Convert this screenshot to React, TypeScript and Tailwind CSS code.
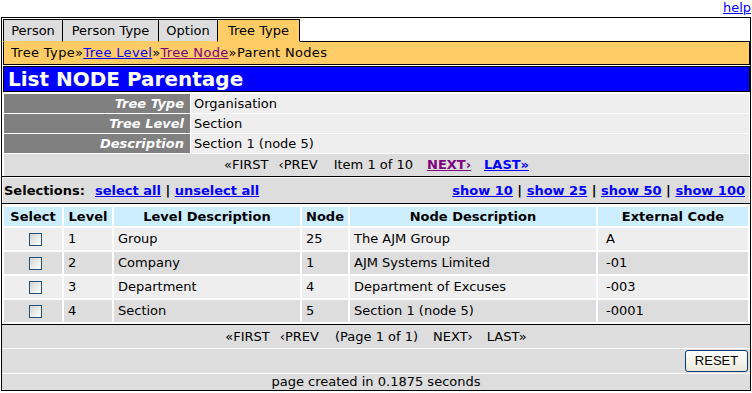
import React from "react";

const rows = [
  { level: "1", ldesc: "Group", node: "25", ndesc: "The AJM Group", code: "A", bg: "bg-[#eeeeee]" },
  { level: "2", ldesc: "Company", node: "1", ndesc: "AJM Systems Limited", code: "-01", bg: "bg-[#dddddd]" },
  { level: "3", ldesc: "Department", node: "4", ndesc: "Department of Excuses", code: "-003", bg: "bg-[#eeeeee]" },
  { level: "4", ldesc: "Section", node: "5", ndesc: "Section 1 (node 5)", code: "-0001", bg: "bg-[#dddddd]" },
];

function Checkbox() {
  return (
    <div className="w-[13px] h-[13px] border border-[#1c5180] bg-linear-to-br from-[#d4d4ce] to-white" />
  );
}

const tabs = [
  { t: "Person", w: "w-[59px]" },
  { t: "Person Type", w: "w-[96px]" },
  { t: "Option", w: "w-[59px]" },
];

export default function App() {
  return (
    <div className="w-[752px] h-[393px] bg-white text-[13px] text-black font-['DejaVu_Sans',Verdana,sans-serif] overflow-hidden">
      <div className="h-[17px] flex justify-end items-start pr-px leading-[15px]">
        <a className="text-[#0000ff] underline cursor-pointer">help</a>
      </div>
      <div className="ml-px w-[750px] border border-black">
        {/* tabs */}
        <div className="mt-px ml-px flex h-[23px]">
          {tabs.map(({ t, w }) => (
            <div
              key={t}
              className={`${w} flex items-center justify-center bg-[#dddddd] border-t border-l border-black border-b border-b-[#ffcc66]`}
            >
              {t}
            </div>
          ))}
          <div className="w-[83px] flex items-center justify-center bg-[#ffcc66] border-t border-l border-r border-black border-b border-b-[#ffcc66]">
            Tree Type
          </div>
          <div className="flex-1 border-b border-black" />
        </div>
        {/* breadcrumb */}
        <div className="ml-px h-[23px] bg-[#ffcc66] border-l border-r border-b border-black flex items-center pl-[7px] tracking-[0.33px]">
          <span>Tree Type»</span>
          <a className="text-[#0000ff] underline">Tree Level</a>
          <span>»</span>
          <a className="text-[#800080] underline">Tree Node</a>
          <span>»Parent Nodes</span>
        </div>
        {/* title */}
        <div className="mt-px ml-px h-[26px] bg-[#0000ff] border border-black flex items-center pl-[4px]">
          <span className="text-white font-bold text-[20px] leading-[24px]">List NODE Parentage</span>
        </div>
        {/* info */}
        <div className="mt-[2px] ml-[2px] mr-px flex flex-col gap-px">
          {[
            ["Tree Type", "Organisation"],
            ["Tree Level", "Section"],
            ["Description", "Section 1 (node 5)"],
          ].map(([k, v]) => (
            <div key={k} className="flex gap-px h-[19px]">
              <div className="w-[186px] bg-[#808080] text-white font-bold italic flex items-center justify-end pr-[6px]">
                {k}
              </div>
              <div className="flex-1 bg-[#eeeeee] flex items-center pl-[3px]">{v}</div>
            </div>
          ))}
        </div>
        {/* pagination */}
        <div className="mt-px ml-[2px] mr-px h-[22px] bg-[#dddddd] flex items-center justify-center">
          <span>«FIRST</span>
          <span className="ml-[10px]">‹PREV</span>
          <span className="ml-[16px]">Item 1 of 10</span>
          <a className="ml-[14px] font-bold text-[#800080] underline">NEXT›</a>
          <a className="ml-[13px] font-bold text-[#0000ff] underline">LAST»</a>
        </div>
        <div className="h-px bg-black" />
        {/* selections */}
        <div className="mt-px ml-px mr-px h-[25px] bg-[#dddddd] flex items-center justify-between pl-px pr-[4px] font-bold">
          <div className="flex items-center">
            <span>Selections:</span>
            <a className="ml-[10px] text-[#0000ff] underline">select all</a>
            <span className="whitespace-pre"> | </span>
            <a className="text-[#0000ff] underline">unselect all</a>
          </div>
          <div className="flex items-center">
            <a className="text-[#0000ff] underline">show 10</a>
            <span className="whitespace-pre"> | </span>
            <a className="text-[#0000ff] underline">show 25</a>
            <span className="whitespace-pre"> | </span>
            <a className="text-[#0000ff] underline">show 50</a>
            <span className="whitespace-pre"> | </span>
            <a className="text-[#0000ff] underline">show 100</a>
          </div>
        </div>
        <div className="h-px bg-black" />
        {/* table */}
        <div className="mt-[3px] px-[2px] grid grid-cols-[58px_48px_186px_46px_246px_1fr] gap-[2px]">
          {["Select", "Level", "Level Description", "Node", "Node Description", "External Code"].map((h) => (
            <div key={h} className="h-[19px] bg-[#cceeff] font-bold flex items-center justify-center">
              {h}
            </div>
          ))}
          {rows.map((r) => (
            <React.Fragment key={r.level}>
              <div className={`h-[22px] ${r.bg} flex items-center justify-center pl-[4px]`}>
                <Checkbox />
              </div>
              <div className={`h-[22px] ${r.bg} flex items-center pl-[4px]`}>{r.level}</div>
              <div className={`h-[22px] ${r.bg} flex items-center pl-[4px]`}>{r.ldesc}</div>
              <div className={`h-[22px] ${r.bg} flex items-center pl-[4px]`}>{r.node}</div>
              <div className={`h-[22px] ${r.bg} flex items-center pl-[4px]`}>{r.ndesc}</div>
              <div className={`h-[22px] ${r.bg} flex items-center pl-[8px]`}>{r.code}</div>
            </React.Fragment>
          ))}
        </div>
        <div className="mt-[2px] h-px bg-black" />
        {/* bottom pagination */}
        <div className="h-[23px] bg-[#dddddd] flex items-center justify-center">
          <span>«FIRST</span>
          <span className="ml-[10px]">‹PREV</span>
          <span className="ml-[16px]">(Page 1 of 1)</span>
          <span className="ml-[15px]">NEXT›</span>
          <span className="ml-[14px]">LAST»</span>
        </div>
        <div className="mt-px h-[24px] bg-[#dddddd] flex items-center justify-end pr-[2px]">
          <button className="w-[63px] h-[22px] rounded-[3px] border border-[#003c74] bg-linear-to-b from-white to-[#ece9d8] text-[13px] font-['Liberation_Sans',Arial,sans-serif] flex items-center justify-center">
            RESET
          </button>
        </div>
        <div className="mt-px h-[16px] bg-[#dddddd] flex items-center justify-center leading-[16px]">
          page created in 0.1875 seconds
        </div>
      </div>
    </div>
  );
}
